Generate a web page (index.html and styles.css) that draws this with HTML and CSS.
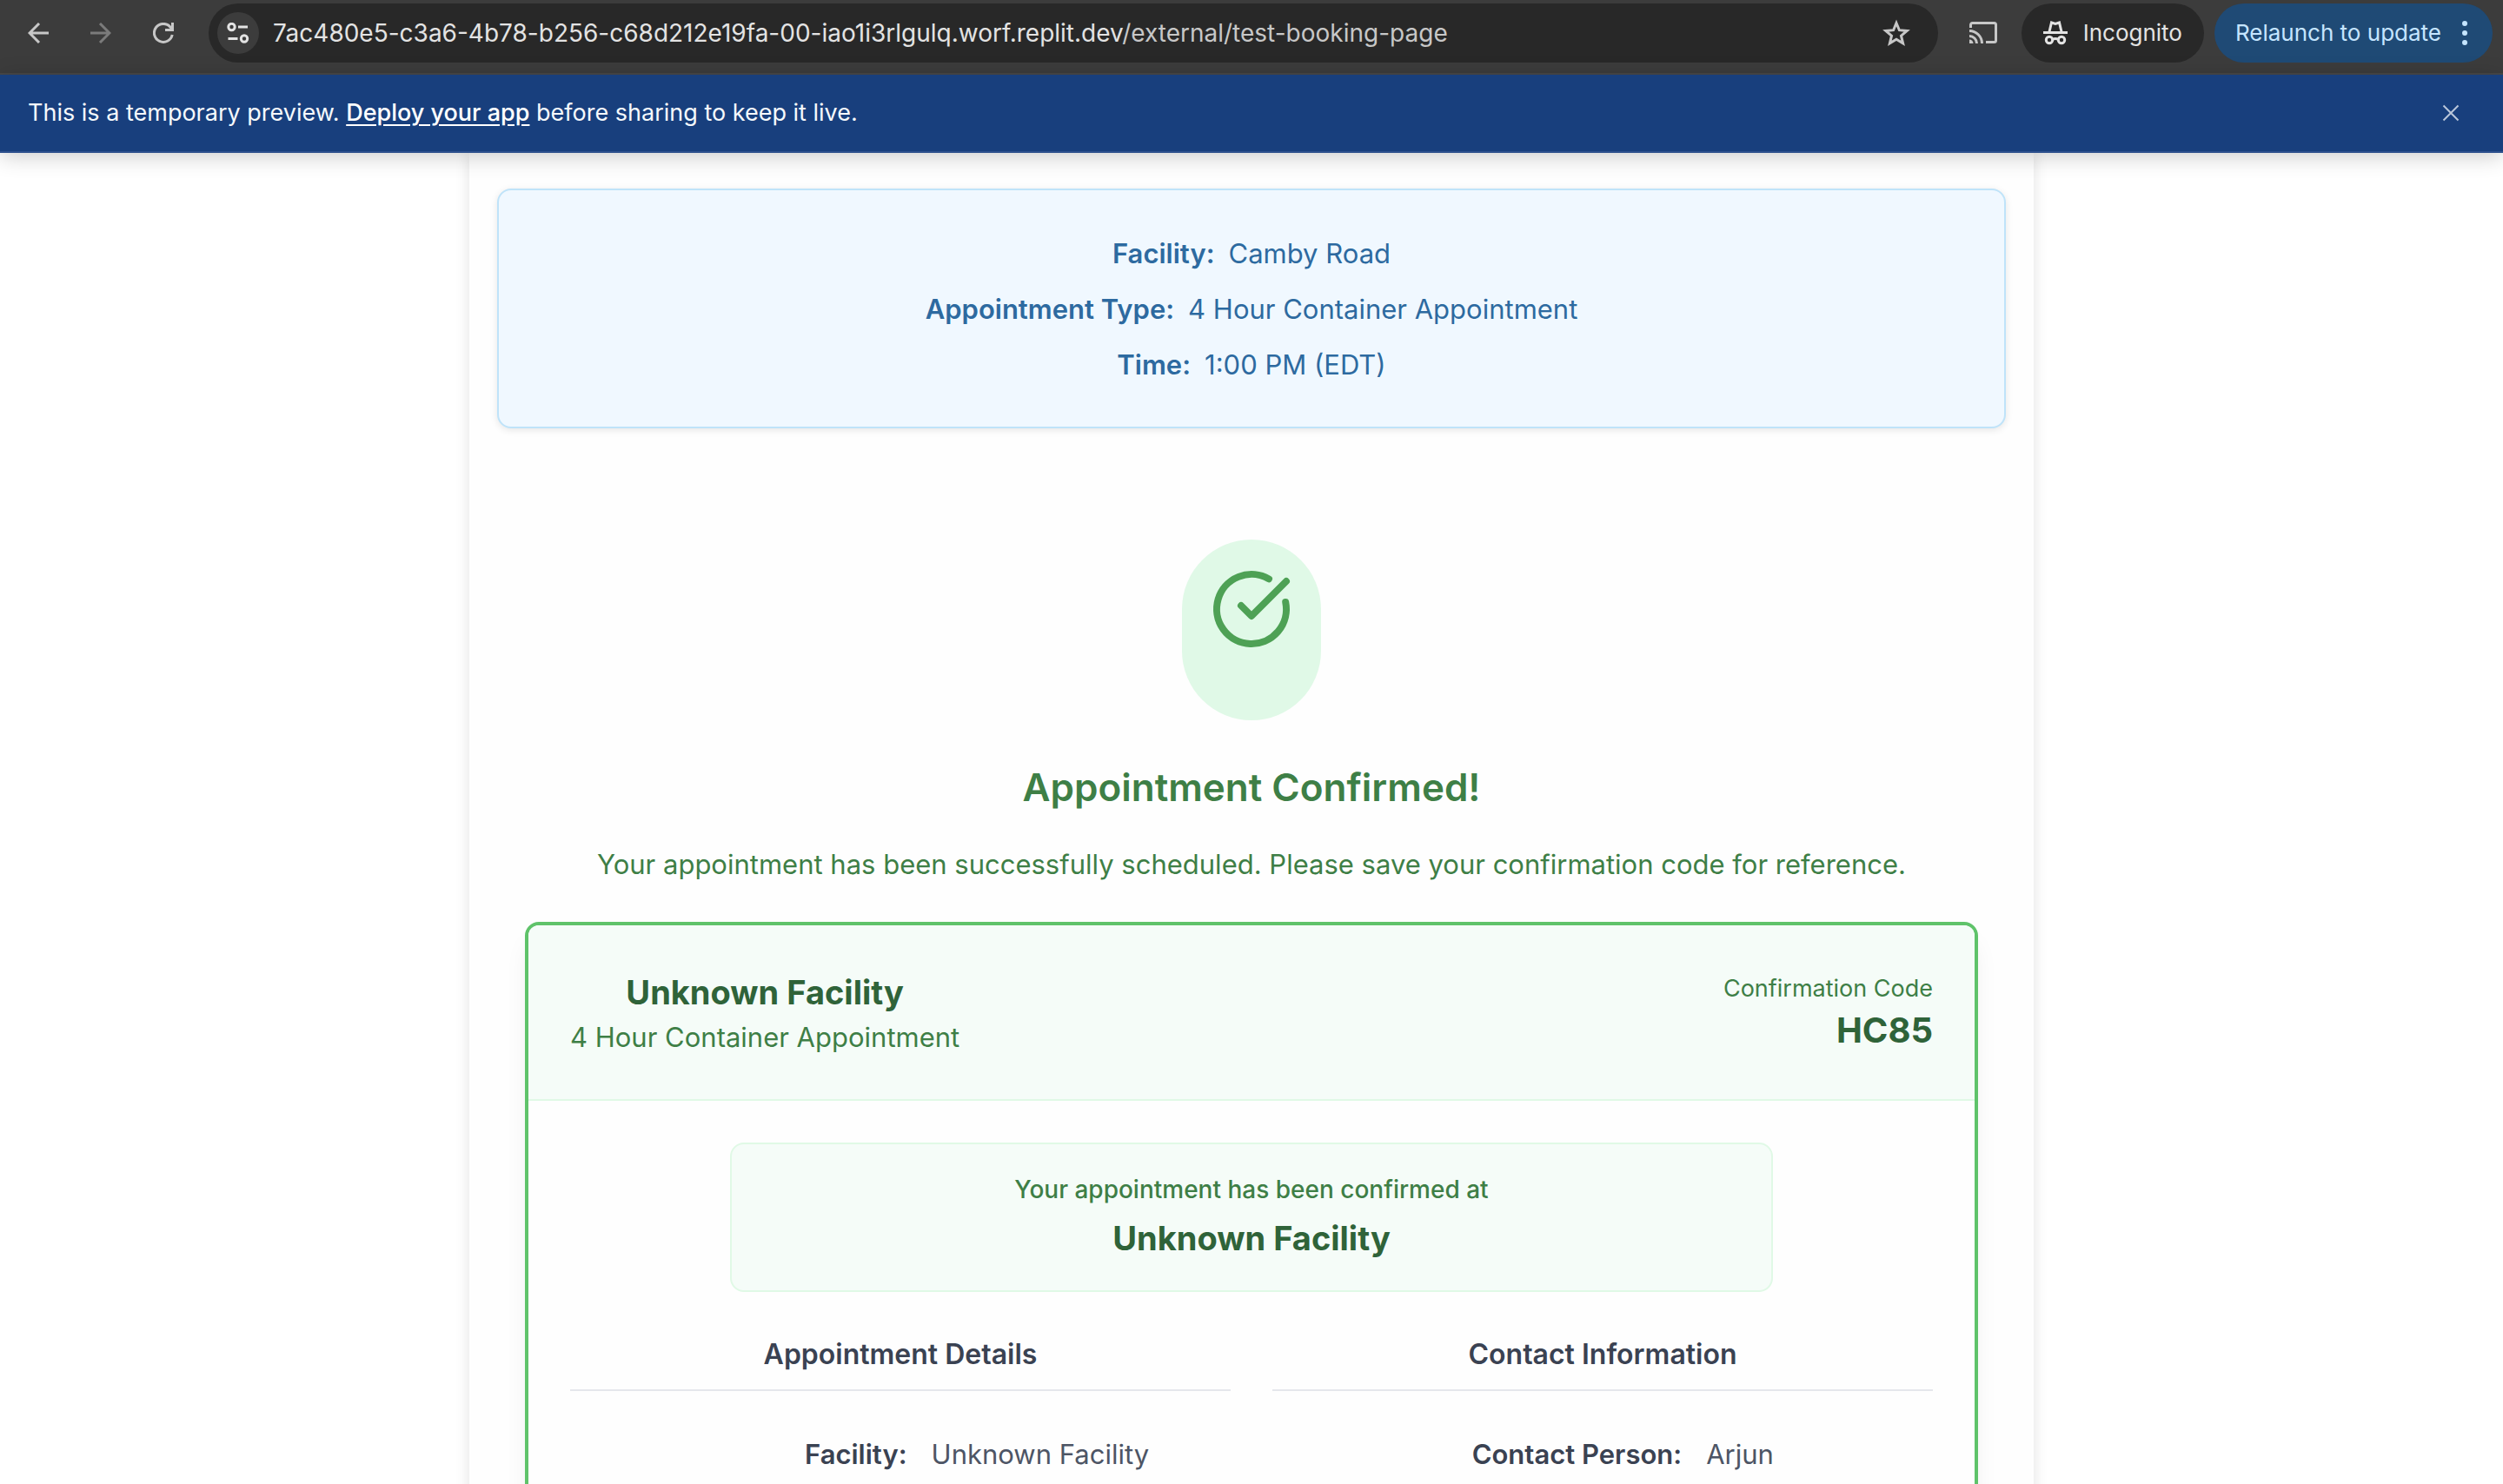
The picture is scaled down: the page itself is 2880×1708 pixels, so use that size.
FILE: index.html
```html
<!DOCTYPE html>
<html lang="en">
<head>
<meta charset="utf-8">
<meta name="viewport" content="width=device-width, initial-scale=1">
<title>Appointment Confirmed</title>
<link rel="stylesheet" href="styles.css">
</head>
<body>
<header class="toolbar">
  <nav class="nav-buttons" aria-label="Navigation">
    <button class="icon-button" type="button" aria-label="Back">
      <svg viewBox="0 0 24 24" width="24" height="24"><path d="M24 12H2M13 1 2 12l11 11"/></svg>
    </button>
    <button class="icon-button icon-button-dim" type="button" aria-label="Forward">
      <svg viewBox="0 0 24 24" width="24" height="24"><path d="M0 12h22M11 1l11 11-11 11"/></svg>
    </button>
    <button class="icon-button" type="button" aria-label="Reload">
      <svg viewBox="0 0 24 24" width="24" height="24"><path d="M22.200 14A10.500 10.500 0 1 1 20 5.200L22 8M22.500 0v8.500H14"/></svg>
    </button>
  </nav>
  <div class="address">
    <button class="site-info" type="button" aria-label="View site information">
      <svg viewBox="0 0 26 24" width="26" height="24"><circle cx="5.500" cy="5" r="3.700"/><circle cx="20" cy="18.500" r="3.700"/><path d="M13 5h11M1.500 18.500h11"/></svg>
    </button>
    <div class="url" role="textbox" aria-label="Address" tabindex="0">7ac480e5-c3a6-4b78-b256-c68d212e19fa-00-iao1i3rlgulq.worf.replit.dev<span class="url-path">/external/test-booking-page</span></div>
    <button class="icon-button" type="button" aria-label="Bookmark this tab">
      <svg viewBox="0 0 32 32" width="32" height="32"><path d="M16 4.500l3.400 8.200 8.800.7-6.700 5.800 2.100 8.600-7.600-4.600-7.600 4.600 2.100-8.600-6.700-5.800 8.800-.7z"/></svg>
    </button>
  </div>
  <button class="icon-button" type="button" aria-label="Cast">
    <svg viewBox="0 0 32 26" width="32" height="26"><path d="M1.500 7V3.500a2 2 0 0 1 2-2h25a2 2 0 0 1 2 2v18a2 2 0 0 1-2 2H19M0 10.500A14.500 14.500 0 0 1 14.500 25M0 16.500A8.500 8.500 0 0 1 8.500 25"/><path class="solid" d="M0 20.500A4.500 4.500 0 0 1 4.500 25H0z"/></svg>
  </button>
  <button class="pill" type="button">
    <svg viewBox="0 0 28 28" width="28" height="28"><path d="M0 13.500h28M7 12.500l2.500-10.500 4.500 1.500L18.500 2 21 12.500"/><circle cx="7" cy="22" r="3.700"/><circle cx="21" cy="22" r="3.700"/><path d="M10.500 21.500q3.500-2 7 0"/></svg>
    <span>Incognito</span>
  </button>
  <button class="pill pill-update" type="button">
    <span>Relaunch to update</span>
    <svg viewBox="0 0 6 28" width="6" height="28"><circle class="solid" cx="3" cy="3" r="3"/><circle class="solid" cx="3" cy="14" r="3"/><circle class="solid" cx="3" cy="25" r="3"/></svg>
  </button>
</header>

<aside class="banner">
  <p class="banner-text">This is a temporary preview. <a class="banner-link" href="#">Deploy your app</a> before sharing to keep it live.</p>
  <button class="banner-close" type="button" aria-label="Dismiss">
    <svg viewBox="0 0 20 20" width="20" height="20"><path d="M1.500 1.500l17 17M18.500 1.500l-17 17"/></svg>
  </button>
</aside>

<main class="page">
  <div class="sheet">
    <section class="summary">
      <p class="summary-row"><strong>Facility:</strong><span>Camby Road</span></p>
      <p class="summary-row"><strong>Appointment Type:</strong><span>4 Hour Container Appointment</span></p>
      <p class="summary-row"><strong>Time:</strong><span>1:00 PM (EDT)</span></p>
    </section>

    <section class="confirmation">
      <div class="check-badge">
        <svg viewBox="0 0 24 24" width="96" height="96" aria-hidden="true"><path d="M21.801 10A10 10 0 1 1 17 3.335"/><path d="m9 11 3 3L22 4"/></svg>
      </div>
      <h1 class="confirmation-title">Appointment Confirmed!</h1>
      <p class="confirmation-text">Your appointment has been successfully scheduled. Please save your confirmation code for reference.</p>

      <article class="ticket">
        <header class="ticket-header">
          <div class="ticket-facility">
            <h2 class="strong-title">Unknown Facility</h2>
            <p class="ticket-type">4 Hour Container Appointment</p>
          </div>
          <div class="ticket-code">
            <p class="ticket-code-label">Confirmation Code</p>
            <p class="strong-title ticket-code-value">HC85</p>
          </div>
        </header>
        <div class="ticket-body">
          <div class="notice">
            <p class="notice-text">Your appointment has been confirmed at</p>
            <p class="strong-title">Unknown Facility</p>
          </div>
          <div class="columns">
            <section>
              <h3 class="column-title">Appointment Details</h3>
              <dl class="facts facts-appointment"><dt>Facility:</dt><dd>Unknown Facility</dd></dl>
            </section>
            <section>
              <h3 class="column-title">Contact Information</h3>
              <dl class="facts facts-contact"><dt>Contact Person:</dt><dd>Arjun</dd></dl>
            </section>
          </div>
        </div>
      </article>
    </section>
  </div>
</main>
</body>
</html>
```
FILE: styles.css
```css
* { box-sizing: border-box; }
body, h1, h2, h3, p, dl, dd { margin: 0; }

body {
  display: flex;
  flex-direction: column;
  height: 100vh;
  overflow: hidden;
  background: #fff;
  font-family: Inter, "Liberation Sans", sans-serif;
  font-size: 31px;
  line-height: 48px;
}

button {
  padding: 0;
  border: 0;
  background: none;
  color: inherit;
  font: inherit;
}

svg {
  display: block;
  flex: none;
  fill: none;
  stroke: currentColor;
  stroke-width: 3;
}
.solid { fill: currentColor; stroke: none; }

/* Browser toolbar */
.toolbar {
  display: flex;
  align-items: center;
  flex: none;
  padding: 4px 12px 12px 32px;
  border-bottom: 2px solid #474747;
  background: #3c3c3c;
  color: #c7c7c7;
  font-size: 26px;
  line-height: 36px;
}
.nav-buttons { display: flex; gap: 48px; margin-right: 40px; }
.icon-button-dim { color: #7b7b7b; }
.address {
  display: flex;
  align-items: center;
  flex: 1;
  min-width: 0;
  height: 68px;
  margin-right: 36px;
  padding: 0 32px 0 10px;
  border-radius: 34px;
  background: #282828;
}
.site-info {
  display: grid;
  place-items: center;
  width: 48px;
  height: 48px;
  margin-right: 16px;
  border-radius: 50%;
  background: #3c3c3c;
  color: #e3e3e3;
}
.url {
  flex: 1;
  min-width: 0;
  overflow: hidden;
  color: #e3e3e3;
  font-size: 28px;
  white-space: nowrap;
}
.url-path { color: #c7c7c7; }
.pill {
  display: flex;
  align-items: center;
  gap: 18px;
  height: 68px;
  margin-left: 28px;
  padding: 0 25px;
  border-radius: 34px;
  background: #282828;
  color: #e3e3e3;
  white-space: nowrap;
}
.pill-update {
  gap: 24px;
  margin-left: 12px;
  padding: 0 29px 0 24px;
  background: #1f4a75;
  color: #c5e5ff;
}

/* Preview banner */
.banner {
  position: relative;
  z-index: 1;
  display: flex;
  align-items: center;
  justify-content: space-between;
  flex: none;
  height: 90px;
  padding: 0 50px 0 32px;
  border-bottom: 2px solid #2d508d;
  background: #183f7d;
  box-shadow: 0 4px 24px rgba(0, 0, 0, 0.2);
  color: #f5f9fc;
  font-size: 27px;
}
.banner-link { color: #fff; font-weight: 500; text-underline-offset: 4px; }
.banner-close { color: #bac6da; }
.banner-close svg { stroke-width: 2; }

/* Page */
.page { flex: 1; min-height: 0; overflow: hidden; }
.sheet {
  max-width: 1800px;
  margin: 0 auto;
  padding: 41px 32px 64px;
  background: #fefefe;
  box-shadow: 0 0 16px rgba(0, 0, 0, 0.12);
  text-align: center;
}
.summary {
  display: grid;
  gap: 16px;
  padding: 49px 48px 47px;
  border: 2px solid #bfe3f9;
  border-radius: 16px;
  background: #f0f8ff;
  box-shadow: 0 2px 8px rgba(0, 0, 0, 0.1);
  color: #2d6aa0;
}
.summary-row { display: flex; justify-content: center; gap: 16px; }
.summary-row strong, .facts dt { font-weight: 600; }

.confirmation {
  padding: 128px 32px 0;
  color: #3e7f46;
}
.check-badge {
  width: 160px;
  height: 208px;
  margin: 0 auto 48px;
  padding: 32px;
  border-radius: 80px;
  background: #e0f9e7;
  color: #4ea155;
}
.check-badge svg { stroke-width: 2; stroke-linecap: round; stroke-linejoin: round; }
.confirmation-title { font-size: 44px; font-weight: 600; line-height: 58px; }
.confirmation-text { margin: 36px 0 42px; }

.ticket {
  overflow: hidden;
  border: 4px solid #5fc36a;
  border-radius: 16px;
  background: #fefefe;
  box-shadow: 0 20px 30px -6px rgba(0, 0, 0, 0.08);
}
.ticket-header {
  display: flex;
  align-items: center;
  justify-content: space-between;
  padding: 49px 48px 47px;
  border-bottom: 2px solid #e0f9e6;
  background: #f5fcf8;
}
.strong-title { color: #2f6339; font-size: 38px; font-weight: 700; line-height: 56px; }
.ticket-code { text-align: right; }
.ticket-code-label { font-size: 27px; line-height: 40px; }
.ticket-code-value { font-size: 40px; }
.ticket-body { padding: 48px; }
.notice {
  display: grid;
  gap: 8px;
  max-width: 1200px;
  margin: 0 auto 48px;
  padding: 32px;
  border: 2px solid #e0f9e6;
  border-radius: 16px;
  background: #f5fcf8;
}
.notice-text { font-size: 28px; font-weight: 500; line-height: 40px; }
.columns {
  display: grid;
  grid-template-columns: 1fr 1fr;
  gap: 48px;
  min-height: 400px;
}
.column-title {
  padding-bottom: 16px;
  border-bottom: 2px solid #e5e7ec;
  color: #3a4252;
  font-size: 32px;
  font-weight: 600;
}
.facts { display: grid; column-gap: 28px; margin-top: 49px; color: #4d5565; }
.facts-appointment { grid-template-columns: 51% 1fr; }
.facts-contact { grid-template-columns: 62% 1fr; }
.facts dt { color: #3a4252; text-align: right; }
.facts dd { text-align: left; }
```
